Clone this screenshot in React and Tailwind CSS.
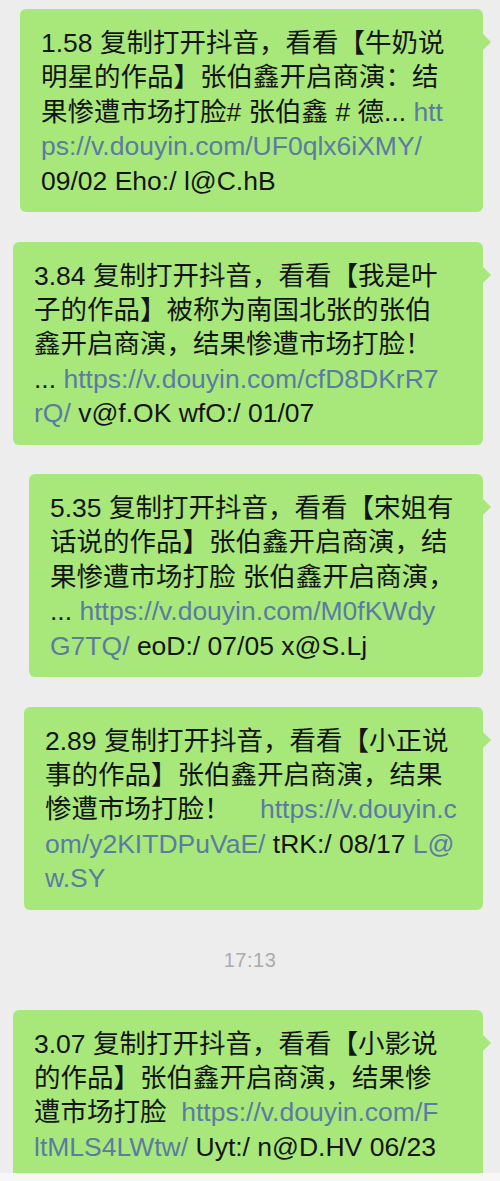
import React from 'react';

const FONT = { fontFamily: '"Liberation Sans", "Noto Sans CJK SC", sans-serif' };

// 每条消息：lines 里每一行是 [文本, 是否链接] 的片段
const MESSAGES = [
  {
    w: 'w-[463px]',
    lines: [
      [['1.58 复制打开抖音，看看【牛奶说']],
      [['明星的作品】张伯鑫开启商演：结']],
      [['果惨遭市场打脸# 张伯鑫 # 德... '], ['htt', true]],
      [['ps://v.douyin.com/UF0qlx6iXMY/', true]],
      [['09/02 Eho:/ l@C.hB']],
    ],
  },
  {
    w: 'w-[470px]',
    lines: [
      [['3.84 复制打开抖音，看看【我是叶']],
      [['子的作品】被称为南国北张的张伯']],
      [['鑫开启商演，结果惨遭市场打脸！']],
      [['... '], ['https://v.douyin.com/cfD8DKrR7', true]],
      [['rQ/', true], [' v@f.OK wfO:/ 01/07']],
    ],
  },
  {
    w: 'w-[454px]',
    lines: [
      [['5.35 复制打开抖音，看看【宋姐有']],
      [['话说的作品】张伯鑫开启商演，结']],
      [['果惨遭市场打脸 张伯鑫开启商演，']],
      [['... '], ['https://v.douyin.com/M0fKWdy', true]],
      [['G7TQ/', true], [' eoD:/ 07/05 x@S.Lj']],
    ],
  },
  {
    w: 'w-[459px]',
    lines: [
      [['2.89 复制打开抖音，看看【小正说']],
      [['事的作品】张伯鑫开启商演，结果']],
      [['惨遭市场打脸！\u00a0\u00a0\u00a0 '], ['https://v.douyin.c', true]],
      [['om/y2KITDPuVaE/', true], [' tRK:/ 08/17 '], ['L@', true]],
      [['w.SY', true]],
    ],
  },
];

const LAST = {
  w: 'w-[470px]',
  lines: [
    [['3.07 复制打开抖音，看看【小影说']],
    [['的作品】张伯鑫开启商演，结果惨']],
    [['遭市场打脸\u00a0 '], ['https://v.douyin.com/F', true]],
    [['ltMLS4LWtw/', true], [' Uyt:/ n@D.HV 06/23']],
  ],
};

function Bubble({ msg, cut }) {
  return (
    <div className={`relative ${msg.w} shrink-0 bg-[#a8e87a] rounded-[6px] pl-[21px] pr-3 pt-[17px] pb-[14px] ${cut ? 'rounded-b-none' : ''}`}>
      <span className="absolute left-full top-[25px] w-0 h-0 border-y-[8px] border-y-transparent border-l-[8px] border-l-[#a8e87a]" />
      <div className="text-[26.5px] leading-[34.4px] text-[#151515]" style={FONT}>
        {msg.lines.map((line, i) => (
          <div key={i} className="whitespace-pre">
            {line.map(([t, link], j) => (
              <span key={j} className={link ? 'text-[#5b7ba3]' : ''}>{t}</span>
            ))}
          </div>
        ))}
      </div>
    </div>
  );
}

export default function App() {
  return (
    <div className="w-[500px] h-[1181px] bg-[#ededed] overflow-hidden flex flex-col">
      <div className="flex-1 overflow-hidden flex flex-col items-end pr-[17px] pt-[9px]">
        <div className="flex flex-col items-end gap-[29.5px]">
          {MESSAGES.map((m, i) => <Bubble key={i} msg={m} />)}
        </div>
        {/* 时间 */}
        <div className="self-stretch h-[100px] flex items-center justify-center pl-[17px] shrink-0">
          <span className="text-[20px] text-[#ababab] tracking-[0.5px]" style={FONT}>17:13</span>
        </div>
        <Bubble msg={LAST} cut />
      </div>
      <div className="h-[8px] bg-[#f7f7f7] shrink-0" />
    </div>
  );
}
